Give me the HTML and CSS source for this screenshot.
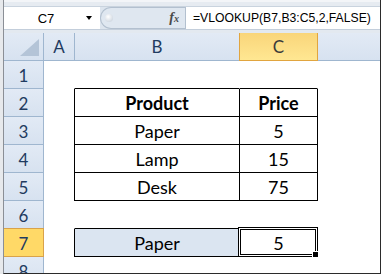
FILE: index.html
```html
<!DOCTYPE html>
<html>
<head>
  <title>VLOOKUP</title>
  <link rel="stylesheet" href="styles.css">
</head>
<body>
  <div class="window">
    <div class="top-strip"></div>
    <div class="formula-bar">
      <div class="name-box">
        <span class="name">C7</span>
        <span class="arrow"></span>
      </div>
      <div class="fx-area">
        <span class="grip"></span>
        <span class="fx">f<small>x</small></span>
      </div>
      <div class="formula">=VLOOKUP(B7,B3:C5,2,FALSE)</div>
    </div>
    <div class="gap"></div>

    <div class="col-headers">
      <div class="corner">
        <svg width="20" height="18" viewBox="0 0 20 18"><polygon points="19,0 19,17 0,17" fill="#b4c4d7"/></svg>
      </div>
      <div class="ch">A</div>
      <div class="ch">B</div>
      <div class="ch sel">C</div>
      <div class="ch last"></div>
    </div>

    <div class="row">
      <div class="rh">1</div>
      <div class="cell"></div>
      <div class="cell b bottom"></div>
      <div class="cell c bottom"></div>
      <div class="cell"></div>
    </div>
    <div class="row">
      <div class="rh">2</div>
      <div class="cell"></div>
      <div class="cell b boxed head">Product</div>
      <div class="cell c boxed head">Price</div>
      <div class="cell"></div>
    </div>
    <div class="row">
      <div class="rh">3</div>
      <div class="cell"></div>
      <div class="cell b boxed">Paper</div>
      <div class="cell c boxed">5</div>
      <div class="cell"></div>
    </div>
    <div class="row">
      <div class="rh">4</div>
      <div class="cell"></div>
      <div class="cell b boxed">Lamp</div>
      <div class="cell c boxed">15</div>
      <div class="cell"></div>
    </div>
    <div class="row">
      <div class="rh">5</div>
      <div class="cell"></div>
      <div class="cell b boxed">Desk</div>
      <div class="cell c boxed">75</div>
      <div class="cell"></div>
    </div>
    <div class="row">
      <div class="rh">6</div>
      <div class="cell"></div>
      <div class="cell b bottom"></div>
      <div class="cell c"></div>
      <div class="cell"></div>
    </div>
    <div class="row">
      <div class="rh sel">7</div>
      <div class="cell"></div>
      <div class="cell b boxed lookup">Paper</div>
      <div class="cell c active">5<span class="handle"></span></div>
      <div class="cell"></div>
    </div>
    <div class="row">
      <div class="rh">8</div>
      <div class="cell"></div>
      <div class="cell b"></div>
      <div class="cell c"></div>
      <div class="cell"></div>
    </div>
  </div>
</body>
</html>
```

FILE: styles.css
```css
body {
  margin: 0;
  width: 383px;
  height: 275px;
  overflow: hidden;
  background: #fff;
  font-family: Lato, "Liberation Sans", sans-serif;
}
.window {
  margin-left: 3px;
  width: 378px;
  height: 274px;
  box-sizing: border-box;
  border-left: 1px solid #8b8f96;
  border-right: 1px solid #2b2b2b;
  border-bottom: 1px solid #2b2b2b;
  background: #fff;
  overflow: hidden;
  box-shadow: -3px 0 0 #e7e9ec;
}
.top-strip {
  height: 7px;
  box-sizing: border-box;
  background: #e6ebf1;
  border-top: 2px solid #f3f5f8;
  border-bottom: 1px solid #c9d3de;
}
.formula-bar {
  display: grid;
  grid-template-columns: 96px 85px 1fr;
  height: 22px;
  background: #dde5ee;
}
.name-box {
  display: flex;
  align-items: center;
  background: #fff;
  font-family: "Liberation Sans", Arial, sans-serif;
  font-size: 13px;
  color: #000;
}
.name {
  flex: 1;
  text-align: center;
  padding-left: 2px;
}
.arrow {
  width: 0;
  height: 0;
  margin-right: 8px;
  border-left: 3.5px solid transparent;
  border-right: 3.5px solid transparent;
  border-top: 4px solid #000;
}
.fx-area {
  display: flex;
  align-items: center;
  justify-content: space-between;
  box-sizing: border-box;
  border: 1px solid #b3c0cf;
  border-right: none;
  border-radius: 11px 0 0 11px;
  background: #dfe7f0;
  padding: 0 6px 0 4px;
}
.grip {
  width: 8px;
  height: 8px;
  border-radius: 50%;
  background: radial-gradient(circle at 40% 35%, #fff, #c2ccd8);
}
.fx {
  font-family: "Liberation Serif", serif;
  font-style: italic;
  font-weight: bold;
  font-size: 14px;
  color: #4a4a4a;
}
.fx small {
  font-size: 10px;
}
.formula {
  background: #fff;
  border-left: 1px solid #b3c0cf;
  font-family: "Liberation Sans", Arial, sans-serif;
  font-size: 12.2px;
  line-height: 22px;
  padding-left: 7px;
  color: #000;
}
.gap {
  height: 4px;
  background: #e3e9f0;
  border-top: 1px solid #c3cedb;
  box-sizing: border-box;
}
.col-headers {
  display: grid;
  grid-template-columns: 40px 31px 165px 78px 1fr;
  height: 28px;
}
.corner, .ch, .rh {
  box-sizing: border-box;
  background: linear-gradient(#e2eaf5, #d7e2f0);
  border-right: 1px solid #9fb6cf;
  border-bottom: 1px solid #9fb6cf;
  color: #1f3b60;
  font-size: 17px;
  display: flex;
  align-items: center;
  justify-content: center;
}
.corner {
  align-items: flex-end;
  justify-content: flex-end;
  padding: 0 3px 3px 0;
}
.corner svg {
  display: block;
}
.ch.last {
  border-right: none;
}
.ch.sel {
  background: linear-gradient(#f9d57a, #ffe792);
  border-color: #e1a53f;
  box-shadow: -1px 0 0 #e1a53f;
  color: #3a3a3a;
}
.row {
  display: grid;
  grid-template-columns: 40px 30px 166px 78px 1fr;
  height: 28px;
}
.rh {
  padding-top: 1px;
}
.rh.sel {
  background: #ffd967;
  border-color: #d9a24a;
  box-shadow: 0 -1px 0 #d9a24a;
}
.cell {
  box-sizing: border-box;
  border-bottom: 1px solid transparent;
  display: flex;
  align-items: center;
  justify-content: center;
  font-size: 18px;
  color: #000;
  padding-top: 1px;
}
.b {
  border-left: 1px solid transparent;
  border-right: 1px solid transparent;
}
.c {
  border-right: 1px solid transparent;
}
.bottom {
  border-bottom-color: #000;
}
.boxed {
  border-bottom-color: #000;
  border-right-color: #000;
}
.b.boxed {
  border-left-color: #000;
}
.head {
  font-weight: bold;
}
.lookup {
  background: #dbe5f1;
}
.active {
  position: relative;
  z-index: 1;
}
.active::after {
  content: "";
  position: absolute;
  left: -2px;
  top: -2px;
  right: -1px;
  bottom: -1px;
  border: 1px solid #000;
  box-shadow: inset 0 0 0 1px #fff, inset 0 0 0 2px #000;
}
.handle {
  position: absolute;
  right: -2px;
  bottom: -2px;
  width: 5px;
  height: 5px;
  background: #000;
  border: 1px solid #fff;
  z-index: 2;
}
```
